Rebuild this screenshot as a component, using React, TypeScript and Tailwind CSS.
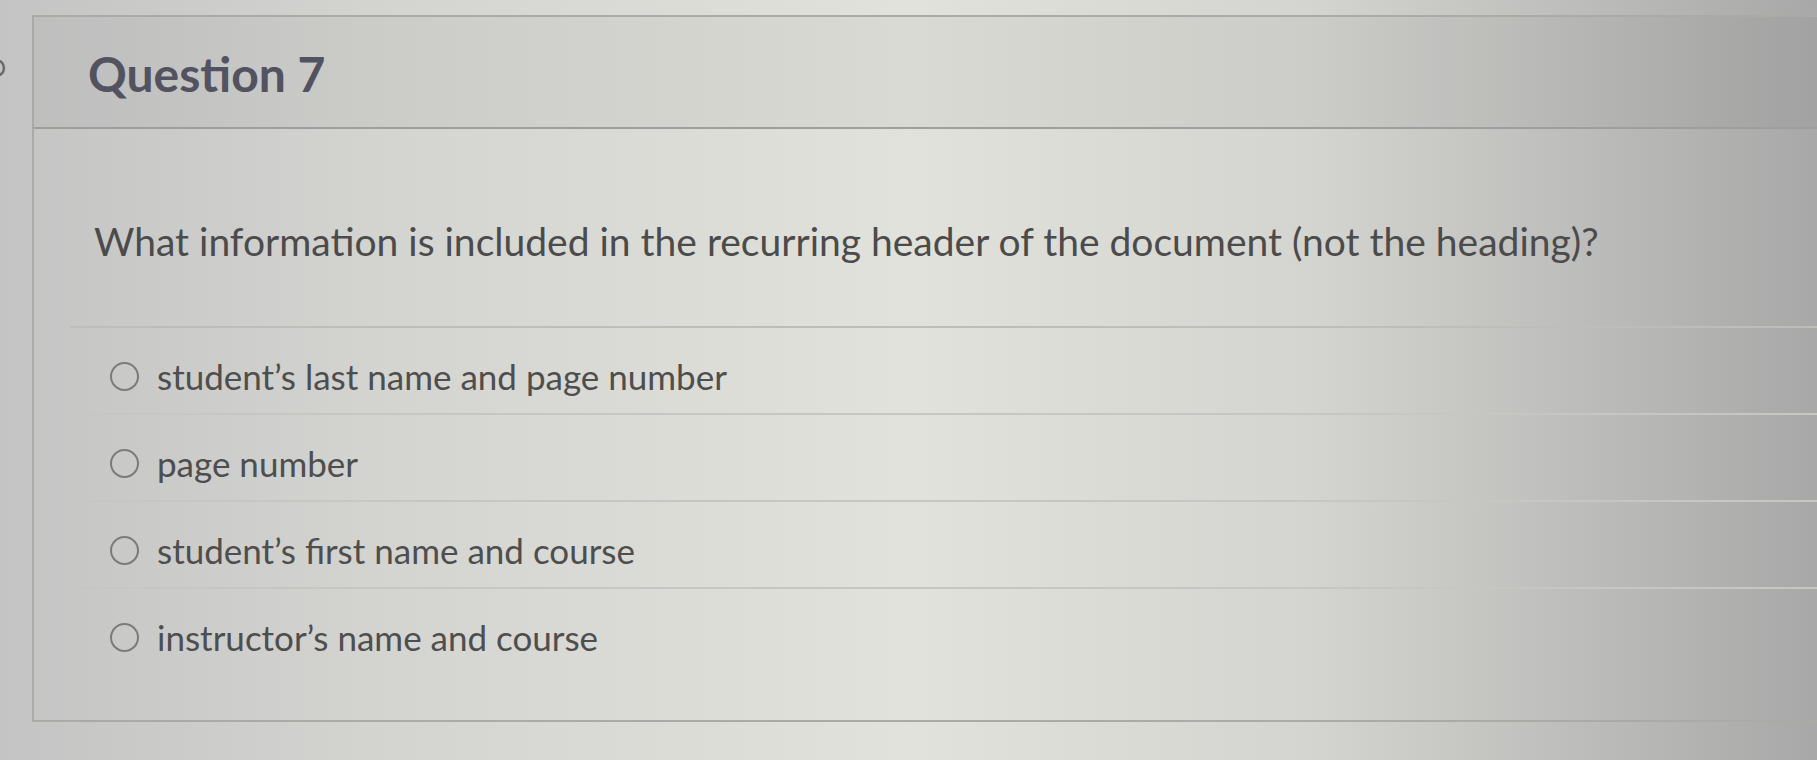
import React from 'react';

const answers = [
  'student’s last name and page number',
  'page number',
  'student’s first name and course',
  'instructor’s name and course',
];

function Radio() {
  return <span className="block h-[29px] w-[29px] shrink-0 rounded-full border-2 border-[#7b7b7b]" />;
}

export default function App() {
  return (
    <div className="relative h-[760px] w-[1817px] overflow-hidden bg-[linear-gradient(90deg,#c4c4c4_0%,#d3d3d0_20%,#e2e2dc_50%,#d4d4d0_72%,#a8a8a8_100%)] font-['Lato','Liberation_Sans',sans-serif]">
      {/* edge of the flag icon peeking in from the left column */}
      <svg className="absolute left-[-14px] top-[56px]" width="24" height="24" viewBox="0 0 24 24">
        <circle cx="10" cy="12" r="8" fill="none" stroke="#6a6a6a" strokeWidth="2.5" />
      </svg>

      <div className="pl-[32px] pt-[15px]">
        <div className="border-y-2 border-l-2 border-[#aaaaa6]">
          <div className="flex h-[112px] items-center border-b-2 border-[#9e9e9c] bg-black/[0.035] pl-[54px] pt-[4px]">
            <h2 className="text-[48px] font-bold leading-none text-[#525260]">Question 7</h2>
          </div>

          <div className="pb-[46px]">
            <p className="pl-[60px] pt-[88px] pb-[61px] text-[39px] leading-[48px] text-[#4b4b4b]">
              What information is included in the recurring header of the document (not the heading)?
            </p>

            <div className="ml-[36px]">
              {answers.map((a) => (
                <label
                  key={a}
                  className="flex h-[87px] items-center gap-[18px] border-t-2 border-[#c6c6c2] pl-[40px] pt-[12px] first:border-[#bdbdb9]"
                >
                  <Radio />
                  <span className="text-[35px] leading-none text-[#4e4e4e]">{a}</span>
                </label>
              ))}
            </div>
          </div>
        </div>
      </div>
    </div>
  );
}
